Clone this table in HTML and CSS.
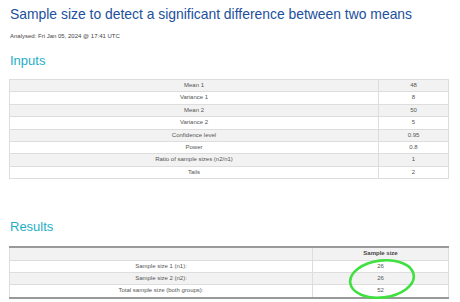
FILE: index.html
```html
<!DOCTYPE html>
<html>
<head>
<meta charset="utf-8">
<link rel="stylesheet" href="styles.css">
</head>
<body>
<div class="page">
  <h1 class="title">Sample size to detect a significant difference between two means</h1>
  <p class="analysed">Analysed: Fri Jan 05, 2024 @ 17:41 UTC</p>
  <h2 class="section inputs-h">Inputs</h2>
  <table class="grid inputs">
    <colgroup><col class="c-lbl"><col class="c-val"></colgroup>
    <tbody>
      <tr><td class="lbl">Mean 1</td><td class="val">48</td></tr>
      <tr><td class="lbl">Variance 1</td><td class="val">8</td></tr>
      <tr><td class="lbl">Mean 2</td><td class="val">50</td></tr>
      <tr><td class="lbl">Variance 2</td><td class="val">5</td></tr>
      <tr><td class="lbl">Confidence level</td><td class="val">0.95</td></tr>
      <tr><td class="lbl">Power</td><td class="val">0.8</td></tr>
      <tr><td class="lbl">Ratio of sample sizes (n2/n1)</td><td class="val">1</td></tr>
      <tr><td class="lbl">Tails</td><td class="val">2</td></tr>
    </tbody>
  </table>
  <h2 class="section results-h">Results</h2>
  <div class="results-wrap">
    <table class="grid results">
      <colgroup><col class="c-lbl"><col class="c-val"></colgroup>
      <thead>
        <tr><th class="lbl"></th><th class="val">Sample size</th></tr>
      </thead>
      <tbody>
        <tr><td class="lbl">Sample size 1 (n1):</td><td class="val">26</td></tr>
        <tr><td class="lbl">Sample size 2 (n2):</td><td class="val">26</td></tr>
        <tr><td class="lbl">Total sample size (both groups):</td><td class="val">52</td></tr>
      </tbody>
    </table>
    <svg class="circle" width="80" height="50" viewBox="0 0 80 50">
      <ellipse cx="40" cy="25" rx="32" ry="18.5" fill="none" stroke="#3fe03f" stroke-width="2.6" transform="rotate(-7 40 25)"/>
    </svg>
  </div>
</div>
</body>
</html>
```

FILE: styles.css
```css
html, body {
  margin: 0;
  padding: 0;
  background: #ffffff;
}
body {
  font-family: "Liberation Sans", Arial, sans-serif;
}
.page {
  padding: 5.5px 11px 0 9px;
  width: 440px;
}
.title {
  margin: 0 0 0 1px;
  font-size: 13.9px;
  line-height: 16px;
  font-weight: normal;
  color: #22509c;
  white-space: nowrap;
}
.analysed {
  margin: 10.5px 0 0 1px;
  font-size: 6px;
  line-height: 8px;
  color: #444444;
}
.section {
  margin: 0 0 0 1px;
  font-size: 13px;
  line-height: 15px;
  font-weight: normal;
  color: #1eaec6;
}
.inputs-h {
  margin-top: 13.3px;
}
.results-h {
  margin-top: 39.3px;
}
.grid {
  width: 440px;
  table-layout: fixed;
  border-collapse: collapse;
  font-size: 6px;
  color: #555555;
}
.grid td, .grid th {
  padding: 2px 0;
  line-height: 7.4px;
  height: 7.4px;
  text-align: center;
  white-space: nowrap;
  border-top: 1px solid #dddddd;
}
.grid .val {
  border-left: 1px solid #dddddd;
}
.inputs {
  margin-top: 10.7px;
  border: 1px solid #dddddd;
}
.inputs .c-val {
  width: 70px;
}
.grid tbody tr:nth-child(odd) td {
  background: #f2f2f2;
}
.results tbody tr:nth-child(odd) td {
  background: #ffffff;
}
.results tbody tr:nth-child(even) td {
  background: #f2f2f2;
}
.results-wrap {
  position: relative;
  margin-top: 12.7px;
}
.results {
  border-left: 1px solid #dddddd;
  border-right: 1px solid #dddddd;
  border-top: 2px solid #999999;
  border-bottom: 2px solid #999999;
}
.results th {
  background: #f2f2f2;
  font-weight: bold;
  color: #444444;
  border-top: none;
}
.results .c-val {
  width: 136px;
}
.circle {
  position: absolute;
  left: 332.5px;
  top: 7.5px;
}
```
